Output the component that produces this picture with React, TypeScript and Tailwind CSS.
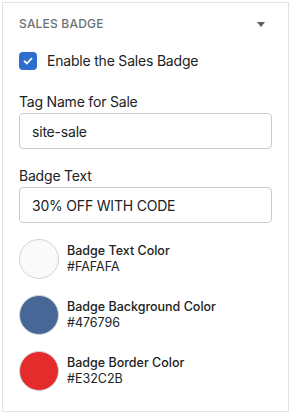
import { useState } from "react";

const colors = [
  { label: "Badge Text Color", value: "#FAFAFA" },
  { label: "Badge Background Color", value: "#476796" },
  { label: "Badge Border Color", value: "#E32C2B" },
];

function Swatch({ label, value }: { label: string; value: string }) {
  return (
    <div className="flex items-center gap-2">
      <div
        className="size-10 shrink-0 rounded-full border border-[#d2d4d6]"
        style={{ backgroundColor: value }}
      />
      <div className="flex flex-col text-[12.5px] leading-4 text-[#202223]">
        <span className="font-medium">{label}</span>
        <span>{value}</span>
      </div>
    </div>
  );
}

function TextField({ label, value }: { label: string; value: string }) {
  return (
    <div className="flex flex-col">
      <label className="mb-px text-sm leading-5 tracking-[-0.2px] text-[#202223]">{label}</label>
      <input
        defaultValue={value}
        className="h-9 rounded border border-[#c9cccf] px-3 text-sm tracking-[-0.2px] text-[#202223] outline-none"
      />
    </div>
  );
}

export default function App() {
  const [enabled, setEnabled] = useState(true);

  return (
    <div className="h-[414px] w-[290px] bg-white pl-[2px] pt-[2px] font-['Inter',sans-serif]">
      <div className="h-[410px] w-[287px] border border-[#e1e3e5] px-4 pt-[13px]">
        <div className="flex items-center justify-between">
          <span className="text-xs leading-4 font-medium tracking-[0.2px] text-[#6d7175]">
            SALES BADGE
          </span>
          <svg width="20" height="16" viewBox="0 0 20 16" className="mr-[1px]">
            <path d="M6 6h8l-4 5z" fill="#5c5f62" />
          </svg>
        </div>

        <label className="mt-[19px] flex items-center gap-[10px]">
          <button
            type="button"
            onClick={() => setEnabled(!enabled)}
            className="flex size-[18px] items-center justify-center rounded-[4px] bg-[#2c6ecb]"
          >
            {enabled && (
              <svg width="12" height="12" viewBox="0 0 12 12">
                <path
                  d="M2.5 6.2l2.3 2.3 4.7-4.9"
                  fill="none"
                  stroke="white"
                  strokeWidth="1.8"
                  strokeLinecap="round"
                  strokeLinejoin="round"
                />
              </svg>
            )}
          </button>
          <span className="text-sm leading-5 tracking-[-0.2px] text-[#202223]">
            Enable the Sales Badge
          </span>
        </label>

        <div className="mt-[21px] flex flex-col gap-[17px]">
          <TextField label="Tag Name for Sale" value="site-sale" />
          <TextField label="Badge Text" value="30% OFF WITH CODE" />
        </div>

        <div className="mt-4 flex flex-col gap-4">
          {colors.map((c) => (
            <Swatch key={c.label} {...c} />
          ))}
        </div>
      </div>
    </div>
  );
}
